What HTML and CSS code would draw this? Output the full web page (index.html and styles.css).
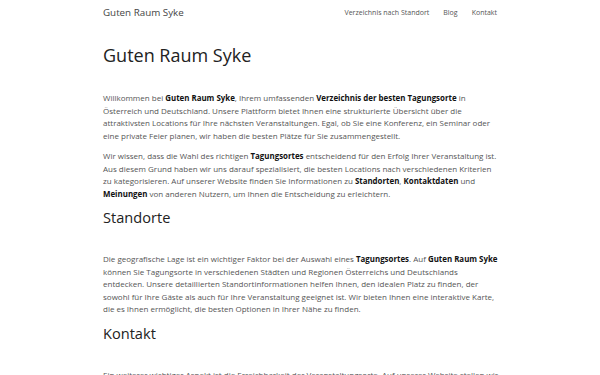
FILE: index.html
```html
<!DOCTYPE html>
<html lang="de">
<head>
    <meta charset="UTF-8">
    <meta name="viewport" content="width=device-width, initial-scale=1.0">
    <title>Guten Raum Syke</title>
    <link rel="stylesheet" href="styles.css">
</head>
<body>
    <header class="site-header">
        <div class="wrap header-inner">
            <a class="site-title" href="#">Guten Raum Syke</a>
            <nav class="site-nav">
                <a href="#">Verzeichnis nach Standort</a>
                <a href="#">Blog</a>
                <a href="#">Kontakt</a>
            </nav>
        </div>
    </header>
    <main class="wrap content">
        <h1>Guten Raum Syke</h1>
        <p>Willkommen bei <strong>Guten Raum Syke</strong>, Ihrem umfassenden <strong>Verzeichnis der besten Tagungsorte</strong> in Österreich und Deutschland. Unsere Plattform bietet Ihnen eine strukturierte Übersicht über die attraktivsten Locations für Ihre nächsten Veranstaltungen. Egal, ob Sie eine Konferenz, ein Seminar oder eine private Feier planen, wir haben die besten Plätze für Sie zusammengestellt.</p>
        <p>Wir wissen, dass die Wahl des richtigen <strong>Tagungsortes</strong> entscheidend für den Erfolg Ihrer Veranstaltung ist. Aus diesem Grund haben wir uns darauf spezialisiert, die besten Locations nach verschiedenen Kriterien zu kategorisieren. Auf unserer Website finden Sie Informationen zu <strong>Standorten</strong>, <strong>Kontaktdaten</strong> und <strong>Meinungen</strong> von anderen Nutzern, um Ihnen die Entscheidung zu erleichtern.</p>
        <h2>Standorte</h2>
        <p>Die geografische Lage ist ein wichtiger Faktor bei der Auswahl eines <strong>Tagungsortes</strong>. Auf <strong>Guten Raum Syke</strong> können Sie Tagungsorte in verschiedenen Städten und Regionen Österreichs und Deutschlands entdecken. Unsere detaillierten Standortinformationen helfen Ihnen, den idealen Platz zu finden, der sowohl für Ihre Gäste als auch für Ihre Veranstaltung geeignet ist. Wir bieten Ihnen eine interaktive Karte, die es Ihnen ermöglicht, die besten Optionen in Ihrer Nähe zu finden.</p>
        <h2>Kontakt</h2>
        <p>Ein weiterer wichtiger Aspekt ist die Erreichbarkeit der Veranstaltungsorte. Auf unserer Website stellen wir Ihnen alle wichtigen Kontaktdaten zur Verfügung, damit Sie schnell und unkompliziert mit den Anbietern in Verbindung treten können.</p>
    </main>
</body>
</html>
```

FILE: styles.css
```css
body {
    margin: 0;
    background: #fff;
    color: #555;
    font-family: "Open Sans", "DejaVu Sans", sans-serif;
    font-size: 8px;
    line-height: 12.5px;
}
a {
    color: inherit;
    text-decoration: none;
}
.wrap {
    max-width: 394px;
    margin: 0 auto;
}
.site-header {
    height: 26px;
}
.header-inner {
    display: flex;
    align-items: center;
    justify-content: space-between;
    height: 26px;
}
.site-title {
    color: #444;
    font-size: 9.8px;
}
.site-nav {
    display: flex;
    gap: 14px;
    font-size: 7px;
    color: #555;
}
.content h1 {
    margin: 19px 0 27px;
    font-size: 18px;
    line-height: 20px;
    font-weight: 400;
    color: #222;
}
.content h2 {
    margin: 0 0 27px;
    font-size: 14.6px;
    line-height: 18px;
    font-weight: 400;
    color: #222;
}
.content p {
    margin: 0 -3px 8px 0;
}
.content strong {
    color: #111;
    font-size: 7.9px;
    font-weight: 700;
}
```
